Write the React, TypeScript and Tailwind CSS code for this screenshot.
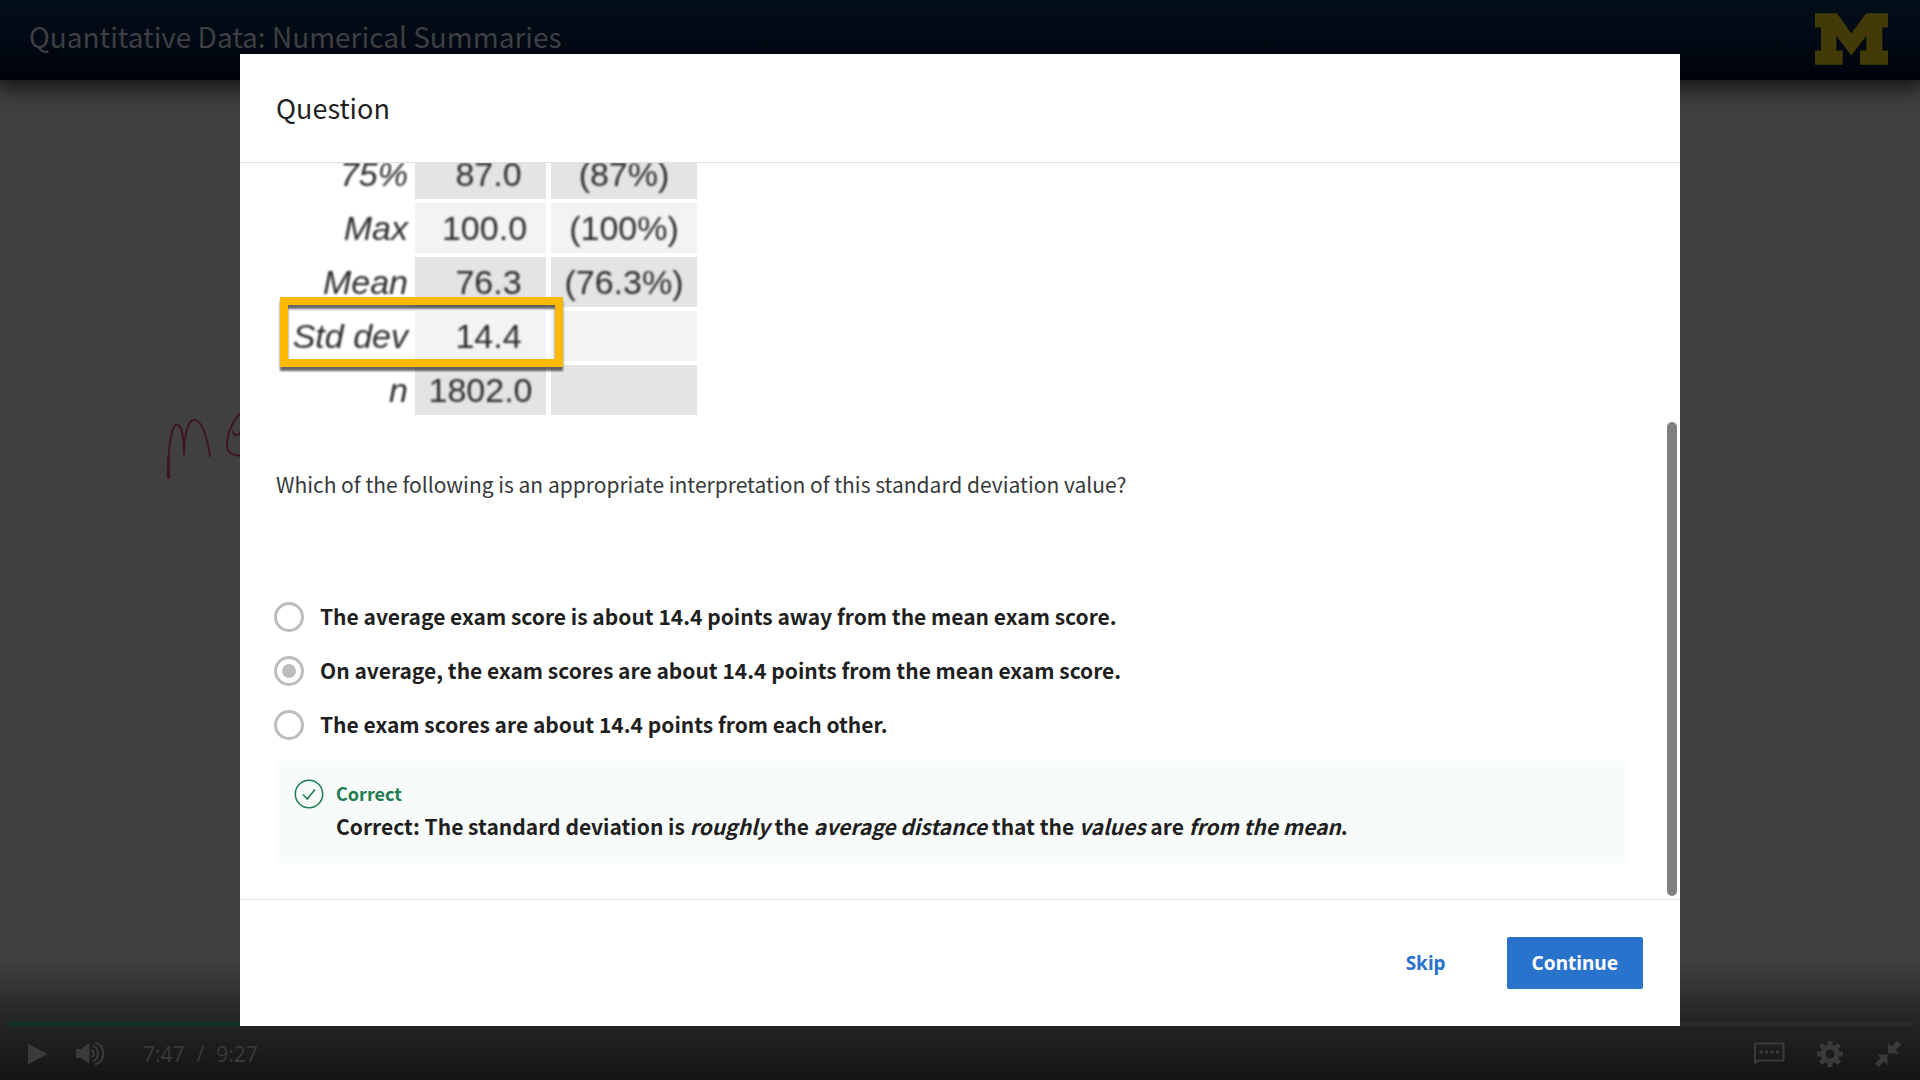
import { useState } from "react";

const stats = [
  { label: "75%", value: "87.0", percent: "(87%)", shaded: true, indent: "pl-4" },
  { label: "Max", value: "100.0", percent: "(100%)", shaded: false, indent: "pl-2" },
  { label: "Mean", value: "76.3", percent: "(76.3%)", shaded: true, indent: "pl-4" },
  { label: "Std dev", value: "14.4", percent: "", shaded: false, indent: "pl-4" },
  { label: "n", value: "1802.0", percent: "", shaded: true, indent: "pl-0" },
];

const options = [
  "The average exam score is about 14.4 points away from the mean exam score.",
  "On average, the exam scores are about 14.4 points from the mean exam score.",
  "The exam scores are about 14.4 points from each other.",
];

function BlockM() {
  return (
    <svg viewBox="0 0 219 155" className="h-[52px] w-[73px]" fill="#423b08" role="img" aria-label="M logo">
      <path d="M0 0H66L109 61L153 0H219V43H202V112H219V155H135V112H154V68L109 127L64 68V112H83V155H0V112H18V43H0Z" />
    </svg>
  );
}

function Handwriting() {
  return (
    <svg viewBox="0 0 120 120" className="mt-[301px] ml-[140px] h-[120px] w-[120px]" fill="none" stroke="#3f1525" strokeWidth="2" strokeLinecap="round" aria-hidden="true">
      <path d="M28.500 97V76C30 58 32 44 37 43.500C42 44 44 58 44 74C44 54 48 39 54 39C62 39 67 56 70 75" />
      <path d="M28.500 96V77" strokeWidth="3" />
      <path d="M101 32C93 38 87 53 87 64C87 72 94 76 103 74M93 51C95 56 99 55 102 49" />
    </svg>
  );
}

function PlayerBar() {
  return (
    <footer className="relative flex h-[120px] flex-col justify-end bg-linear-to-b from-[#404040] via-[#252525] to-[#141414]">
      <div className="mx-2 flex h-1">
        <div className="w-4/5 bg-[#103020]" />
        <div className="flex-1 bg-[#2b2b2b]" />
      </div>
      <div className="flex h-[54px] items-center justify-between pt-px pr-[19px] pl-[26px] text-[#3a3a3a]">
        <div className="flex items-center">
          <button type="button" aria-label="Play">
            <svg viewBox="0 0 22 22" className="h-[22px] w-[22px]" fill="currentColor"><path d="M2 0.500L21.500 11L2 21.500Z" /></svg>
          </button>
          <button type="button" aria-label="Mute" className="ml-7">
            <svg viewBox="0 0 29 25" className="h-[25px] w-[29px]" fill="none" stroke="currentColor" strokeWidth="2">
              <path d="M0 8H5L13.500 2V23L5 17H0Z" fill="currentColor" stroke="none" />
              <path d="M15.500 9C18.500 10 18.500 15 15.500 16M17 5C23.500 7 23.500 18 17 20M19 1.500C30 5 30 20 19 23.500" />
            </svg>
          </button>
          <span className="ml-[38px] flex gap-3 font-['Open_Sans',sans-serif] text-[21px] leading-7">
            <span>7:47</span><span>/</span><span>9:27</span>
          </span>
        </div>
        <div className="flex items-center gap-8">
          <button type="button" aria-label="Captions">
            <svg viewBox="0 0 31 23" className="h-[23px] w-[31px]" fill="none" stroke="currentColor" strokeWidth="2">
              <path d="M1 21V1.500H29.500V18.500H4Z" strokeLinejoin="round" />
              <path d="M5.500 10H8.500M11 10H14M16.500 10H19.500M22 10H25" strokeWidth="3" />
            </svg>
          </button>
          <button type="button" aria-label="Settings">
            <svg viewBox="0 0 26 26" className="h-[26px] w-[26px]" fill="none" stroke="currentColor">
              <circle cx="13" cy="13" r="7" strokeWidth="5" />
              <path d="M13 0V5M13 21V26M0 13H5M21 13H26M3.800 3.800L7.500 7.500M18.500 18.500L22.200 22.200M22.200 3.800L18.500 7.500M7.500 18.500L3.800 22.200" strokeWidth="5" />
            </svg>
          </button>
          <button type="button" aria-label="Exit full screen">
            <svg viewBox="0 0 26 26" className="h-[26px] w-[26px]" fill="currentColor">
              <path d="M13 2L16.500 5.500L22 0L26 3.500L20.500 9L23.500 12.500H13ZM12.500 13.500V24L9 20.500L3.500 26L0 22.500L5.500 17L2.500 13.500Z" />
            </svg>
          </button>
        </div>
      </div>
    </footer>
  );
}

function StatsTable() {
  return (
    <div className="relative self-start">
      <table className="border-separate border-spacing-x-[5px] border-spacing-y-1 font-['Liberation_Sans',sans-serif] text-[34px] leading-[50px] text-[#2c2c2e] [&_span]:inline-block [&_span]:blur-[1px]">
        <tbody>
          {stats.map((row) => (
            <tr key={row.label} className={row.shaded ? "[&>td]:bg-[#e4e4e6]" : "[&>td]:bg-[#f3f3f5]"}>
              <th scope="row" className="h-[50px] w-[129px] p-0 pr-0.5 text-right align-top font-normal whitespace-nowrap italic">
                <span>{row.label}</span>
              </th>
              <td className="w-[131px] p-0 text-center align-top"><span className={row.indent}>{row.value}</span></td>
              <td className="w-[146px] p-0 text-center align-top"><span>{row.percent}</span></td>
            </tr>
          ))}
        </tbody>
      </table>
      <div className="absolute bottom-[52px] left-1 h-[70px] w-[283px] border-8 border-[#fdb900] drop-shadow-[0_4px_1px_rgba(0,0,0,0.6)]" />
    </div>
  );
}

export default function App() {
  const [selected, setSelected] = useState(1);

  return (
    <div className="relative flex h-screen flex-col overflow-hidden bg-[#404040] font-['Noto_Sans_CJK_SC',sans-serif]">
      <header className="flex h-20 shrink-0 items-center justify-between bg-linear-to-b from-[#020e18] via-[#010a14] to-[#01030a] pr-8 pb-0.5 pl-[29px] shadow-[0_4px_20px_4px_rgba(0,0,0,0.7)]">
        <h1 className="pb-1.5 text-[28px] leading-9 text-[#3d3f42]">Quantitative Data: Numerical Summaries</h1>
        <BlockM />
      </header>
      <main className="min-h-0 flex-1">
        <Handwriting />
      </main>
      <PlayerBar />

      <div className="absolute inset-0 flex items-center justify-center">
        <section role="dialog" aria-labelledby="dialog-title" className="flex h-[90%] w-3/4 flex-col bg-white text-[#1f1f1f]">
          <div className="flex h-[109px] shrink-0 items-center border-b border-[#e1e1e1] px-9">
            <h2 id="dialog-title" className="text-[27px] leading-9">Question</h2>
          </div>

          <div className="relative flex min-h-0 flex-1 flex-col justify-end overflow-hidden pr-[52px] pb-9 pl-9">
            <StatsTable />
            <p className="mt-[50px] text-[21px] leading-[30px] text-[#373a3c]">
              Which of the following is an appropriate interpretation of this standard deviation value?
            </p>
            <fieldset className="mt-[91px] mb-[9px] -ml-0.5">
              {options.map((text, i) => (
                <label key={text} className="flex h-[54px] items-center gap-4 text-[21px] leading-[30px] font-bold">
                  <input
                    type="radio"
                    name="answer"
                    checked={selected === i}
                    onChange={() => setSelected(i)}
                    className="h-[30px] w-[30px] shrink-0 appearance-none rounded-full border-[3px] border-[#bdbdbd] bg-white bg-clip-content p-[5px] checked:bg-[#bdbdbd]"
                  />
                  <span className="pb-0.5">{text}</span>
                </label>
              ))}
            </fieldset>
            <div className="flex h-[102px] shrink-0 gap-3 bg-[#f7fbf9] pt-[18px] pl-[18px]">
              <svg viewBox="0 0 30 30" className="h-[30px] w-[30px] shrink-0" fill="none" stroke="#1d7c50" strokeWidth="1.500" aria-hidden="true">
                <circle cx="15" cy="15" r="13.700" />
                <path d="M9 15.500L13.300 20L21 10.500" />
              </svg>
              <div className="font-bold">
                <p className="text-[18px] leading-7 text-[#1d7c50]">Correct</p>
                <p className="pt-1 text-[21px] leading-[30px]">
                  Correct: The standard deviation is <em>roughly</em> the <em>average distance</em> that the <em>values</em> are <em>from the mean</em>.
                </p>
              </div>
            </div>
            <div className="absolute right-[3px] bottom-[3px] h-[474px] w-[10px] rounded-full bg-[#808080]" />
          </div>

          <div className="flex h-[127px] shrink-0 items-center justify-end border-t border-[#e1e1e1] pr-[37px] font-['Noto_Sans',sans-serif] text-[19px] leading-7 font-bold">
            <button type="button" className="h-[52px] px-[25px] text-[#2a73cc]">Skip</button>
            <button type="button" className="ml-9 h-[52px] rounded-xs bg-[#2a73cc] px-[25px] text-white">Continue</button>
          </div>
        </section>
      </div>
    </div>
  );
}
